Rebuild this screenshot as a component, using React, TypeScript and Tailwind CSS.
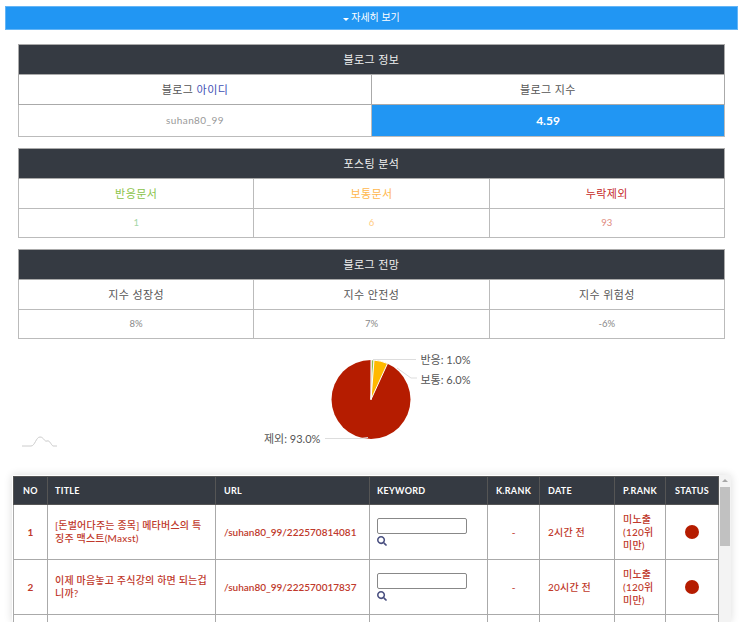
import { FaSearch } from "react-icons/fa";

const FONT = "font-['Lato','Noto_Sans_CJK_KR',sans-serif]";

// ─── Data ───

const POSTS = [
  { no: 1, title: "[돈벌어다주는 종목] 메타버스의 특징주 맥스트(Maxst)", url: "/suhan80_99/222570814081", date: "2시간 전" },
  { no: 2, title: "이제 마음놓고 주식강의 하면 되는겁니까?", url: "/suhan80_99/222570017837", date: "20시간 전" },
];

const COLUMNS = [
  { label: "NO", width: "w-[34px]", align: "text-center px-[8px]" },
  { label: "TITLE", width: "w-[168px]", align: "text-left px-[7px]" },
  { label: "URL", width: "w-[154px]", align: "text-left px-[8px]" },
  { label: "KEYWORD", width: "w-[118px]", align: "text-left px-[7px]" },
  { label: "K.RANK", width: "w-[52px]", align: "text-center px-[4px]" },
  { label: "DATE", width: "w-[75px]", align: "text-left px-[8px]" },
  { label: "P.RANK", width: "w-[51px]", align: "text-center px-[4px]" },
  { label: "STATUS", width: "w-[53px]", align: "text-center px-[4px]" },
];

// ─── Summary tables ───

function InfoHeader({ title, span }: { title: string; span: number }) {
  return (
    <tr>
      <th colSpan={span} className="h-[30px] border border-[#aaa] bg-[#353a42] pt-px text-[11px] font-normal tracking-[0.4px] text-[#f0f0f0]">
        {title}
      </th>
    </tr>
  );
}

function ThreeColTable({ title, head, values }: { title: string; head: { text: string; color: string }[]; values: { text: string; color: string }[] }) {
  return (
    <table className="w-[707px] table-fixed border-collapse">
      <thead>
        <InfoHeader title={title} span={3} />
      </thead>
      <tbody>
        <tr>
          {head.map((h) => (
            <td key={h.text} className={`h-[30px] border border-[#bbb] pt-px text-center text-[11px] tracking-[0.4px] ${h.color}`}>
              {h.text}
            </td>
          ))}
        </tr>
        <tr>
          {values.map((v) => (
            <td key={v.text} className={`h-[29px] border border-[#bbb] text-center text-[9.5px] ${v.color}`}>
              {v.text}
            </td>
          ))}
        </tr>
      </tbody>
    </table>
  );
}

// ─── Pie chart ───

function PieChart() {
  return (
    <svg width="743" height="125" viewBox="0 0 743 125" className="block">
      <path d="M22 107 L31 107 C35 107 36 98 40 98 C44 98 44 103 47 102 C50 101 51 106 53 107 L57 107" fill="none" stroke="#ccc" strokeWidth="1" />
      <circle cx="371" cy="60.5" r="39.5" fill="#b51c00" />
      <path d="M371 60.5 L371.5 21 A39.5 39.5 0 0 1 374 21.1 Z" fill="#8bc34a" stroke="#fff" strokeWidth="0.7" />
      <path d="M371 60.5 L374 21.1 A39.5 39.5 0 0 1 387.5 24.5 Z" fill="#ffb900" stroke="#fff" strokeWidth="1" />
      <path d="M371 60.5 L371 21" stroke="#fff" strokeWidth="1" />
      <g fill="none" stroke="#ddd" strokeWidth="1">
        <path d="M373 20.5 L416 20.5" />
        <path d="M397 29 L411 39 L417 39" />
        <path d="M325 99.5 L360 99.5 L368 98.5" />
      </g>
      <g className="fill-[#555] text-[11px]">
        <text x="420.5" y="24.5">반응: 1.0%</text>
        <text x="420.5" y="44.5">보통: 6.0%</text>
        <text x="264" y="104">제외: 93.0%</text>
      </g>
    </svg>
  );
}

// ─── Ranking table ───

function PostRow({ no, title, url, date }: { no: number; title: string; url: string; date: string }) {
  return (
    <tr className="text-[10px] font-medium text-[#c0392b]">
      <td className="h-[55px] border border-[#aaa] text-center font-bold">{no}</td>
      <td className="border border-[#aaa] pl-[7px] pr-[6px] leading-[13.5px] tracking-[0.2px] break-all">{title}</td>
      <td className="border border-[#aaa] px-[8px] font-semibold whitespace-nowrap">{url}</td>
      <td className="border border-[#aaa] px-[7px]">
        <input className="block h-[16px] w-[90px] rounded-[2px] border border-[#888] bg-white" />
        <FaSearch className="mt-[2px] text-[10px] text-[#4a5080]" />
      </td>
      <td className="border border-[#aaa] text-center">-</td>
      <td className="border border-[#aaa] px-[8px] tracking-[0.2px]">{date}</td>
      <td className="border border-[#aaa] px-[8px] leading-[13px] tracking-[0.2px]">미노출 (120위 미만)</td>
      <td className="border border-[#aaa] pr-px">
        <div className="mx-auto h-[14px] w-[14px] rounded-full bg-[#b51c00]" />
      </td>
    </tr>
  );
}

function EmptyRow() {
  return (
    <tr>
      {COLUMNS.map((c) => (
        <td key={c.label} className="h-[55px] border border-[#aaa]" />
      ))}
    </tr>
  );
}

// ─── Component ───

export default function App() {
  return (
    <div className={`h-[622px] w-[743px] overflow-hidden bg-white ${FONT}`}>
      <div className="pl-[5px] pt-[6px]">
        <button className="flex h-[24px] w-[733px] items-center justify-center gap-[2px] border border-[#64b5f6] bg-[#2196f3] pb-[2px] text-[10px] text-white">
          <span className="mt-[4px] h-0 w-0 border-x-[3px] border-t-[3px] border-x-transparent border-t-white" />
          자세히 보기
        </button>
      </div>

      <div className="mt-[14px] flex flex-col gap-[11px] pl-[18px]">
        <table className="w-[707px] table-fixed border-collapse">
          <thead>
            <InfoHeader title="블로그 정보" span={2} />
          </thead>
          <tbody>
            <tr>
              <td className="h-[30px] border border-[#aaa] pt-px text-center text-[11px] tracking-[0.4px] text-[#555]">
                블로그 <span className="text-[#3f51b5]">아이디</span>
              </td>
              <td className="border border-[#aaa] pt-px text-center text-[11px] tracking-[0.4px] text-[#555]">블로그 지수</td>
            </tr>
            <tr>
              <td className="h-[32px] border border-[#bbb] text-center text-[10px] tracking-[0.4px] text-[#999]">suhan80_99</td>
              <td className="border border-[#bbb] bg-[#2196f3] text-center text-[12px] font-bold text-white">4.59</td>
            </tr>
          </tbody>
        </table>

        <ThreeColTable
          title="포스팅 분석"
          head={[
            { text: "반응문서", color: "text-[#8bc34a]" },
            { text: "보통문서", color: "text-[#ffb74d]" },
            { text: "누락제외", color: "text-[#c62828]" },
          ]}
          values={[
            { text: "1", color: "text-[#a5d6a7]" },
            { text: "6", color: "text-[#ffcc80]" },
            { text: "93", color: "text-[#e08a80]" },
          ]}
        />

        <ThreeColTable
          title="블로그 전망"
          head={[
            { text: "지수 성장성", color: "text-[#555]" },
            { text: "지수 안전성", color: "text-[#555]" },
            { text: "지수 위험성", color: "text-[#555]" },
          ]}
          values={[
            { text: "8%", color: "text-[#888]" },
            { text: "7%", color: "text-[#888]" },
            { text: "-6%", color: "text-[#888]" },
          ]}
        />
      </div>

      <PieChart />

      <div className="ml-[12px] mt-[11px] flex h-[147px] w-[719px] rounded-[2px] bg-white shadow-[0_0_8px_rgba(0,0,0,0.14)]">
        <div className="w-[707px] overflow-hidden pl-px pt-px">
          <table className="w-[705px] table-fixed border-collapse">
            <thead>
              <tr>
                {COLUMNS.map((c) => (
                  <th key={c.label} className={`h-[28px] ${c.width} ${c.align} border border-[#555] bg-[#353a42] text-[9px] font-bold tracking-[0.3px] text-white`}>
                    {c.label}
                  </th>
                ))}
              </tr>
            </thead>
            <tbody>
              {POSTS.map((p) => (
                <PostRow key={p.no} {...p} />
              ))}
              <EmptyRow />
            </tbody>
          </table>
        </div>

        {/* scrollbar */}
        <div className="flex w-[12px] flex-col items-center bg-[#f3f3f3]">
          <div className="mt-[4px] h-0 w-0 border-x-[3px] border-b-[3px] border-x-transparent border-b-[#a8a8a8]" />
          <div className="mt-[5px] h-[59px] w-[10px] bg-[#c1c1c1]" />
        </div>
      </div>
    </div>
  );
}
